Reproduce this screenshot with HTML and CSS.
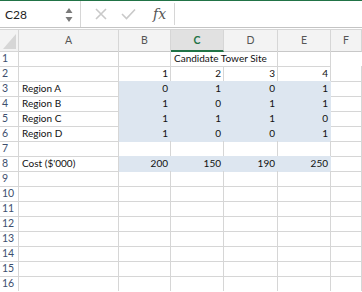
FILE: index.html
```html
<!DOCTYPE html>
<html lang="en">
<head>
    <meta charset="UTF-8">
    <title>Sheet</title>
    <link rel="stylesheet" href="styles.css">
</head>
<body>

    <!-- formula bar -->
    <div class="formula-bar">
        <div class="name-box">
            <span class="cell-ref">C28</span>
            <span class="spinner">
                <svg width="8" height="16" viewBox="0 0 8 16"><path d="M4 1 L7.5 6 L0.5 6 Z M0.5 10 L7.5 10 L4 15 Z" fill="#7a7a7a"/></svg>
            </span>
        </div>
        <div class="fb-buttons">
            <svg width="12" height="12" viewBox="0 0 12 12"><path d="M1 1 L11 11 M11 1 L1 11" stroke="#c9c9c9" stroke-width="1.6" fill="none"/></svg>
            <svg width="15" height="12" viewBox="0 0 15 12"><path d="M1 6 L5.5 10.5 L14 1.5" stroke="#c9c9c9" stroke-width="1.6" fill="none"/></svg>
            <span class="fx">fx</span>
        </div>
        <div class="formula-input"></div>
    </div>

    <!-- sheet -->
    <div class="sheet">
        <div class="row head">
            <div class="corner"><span class="tri"></span></div>
            <div class="ch">A</div><div class="ch">B</div><div class="ch active">C</div><div class="ch">D</div><div class="ch">E</div><div class="ch">F</div>
        </div>
        <div class="row">
            <div class="rh">1</div><div class="c"></div><div class="c"></div><div class="c span2"><span class="over">Candidate Tower Site</span></div><div class="c"></div><div class="c"></div>
        </div>
        <div class="row">
            <div class="rh">2</div><div class="c"></div><div class="c n ul">1</div><div class="c n ul">2</div><div class="c n ul">3</div><div class="c n ul">4</div><div class="c"></div>
        </div>
        <div class="row">
            <div class="rh">3</div><div class="c">Region A</div><div class="c n f">0</div><div class="c n f">1</div><div class="c n f">0</div><div class="c n f">1</div><div class="c"></div>
        </div>
        <div class="row">
            <div class="rh">4</div><div class="c">Region B</div><div class="c n f">1</div><div class="c n f">0</div><div class="c n f">1</div><div class="c n f">1</div><div class="c"></div>
        </div>
        <div class="row">
            <div class="rh">5</div><div class="c">Region C</div><div class="c n f">1</div><div class="c n f">1</div><div class="c n f">1</div><div class="c n f">0</div><div class="c"></div>
        </div>
        <div class="row">
            <div class="rh">6</div><div class="c">Region D</div><div class="c n f">1</div><div class="c n f">0</div><div class="c n f">0</div><div class="c n f">1</div><div class="c"></div>
        </div>
        <div class="row">
            <div class="rh">7</div><div class="c"></div><div class="c"></div><div class="c"></div><div class="c"></div><div class="c"></div><div class="c"></div>
        </div>
        <div class="row">
            <div class="rh">8</div><div class="c">Cost ($'000)</div><div class="c n f">200</div><div class="c n f">150</div><div class="c n f">190</div><div class="c n f">250</div><div class="c"></div>
        </div>
        <div class="row"><div class="rh">9</div><div class="c"></div><div class="c"></div><div class="c"></div><div class="c"></div><div class="c"></div><div class="c"></div></div>
        <div class="row"><div class="rh">10</div><div class="c"></div><div class="c"></div><div class="c"></div><div class="c"></div><div class="c"></div><div class="c"></div></div>
        <div class="row"><div class="rh">11</div><div class="c"></div><div class="c"></div><div class="c"></div><div class="c"></div><div class="c"></div><div class="c"></div></div>
        <div class="row"><div class="rh">12</div><div class="c"></div><div class="c"></div><div class="c"></div><div class="c"></div><div class="c"></div><div class="c"></div></div>
        <div class="row"><div class="rh">13</div><div class="c"></div><div class="c"></div><div class="c"></div><div class="c"></div><div class="c"></div><div class="c"></div></div>
        <div class="row"><div class="rh">14</div><div class="c"></div><div class="c"></div><div class="c"></div><div class="c"></div><div class="c"></div><div class="c"></div></div>
        <div class="row"><div class="rh">15</div><div class="c"></div><div class="c"></div><div class="c"></div><div class="c"></div><div class="c"></div><div class="c"></div></div>
        <div class="row"><div class="rh">16</div><div class="c"></div><div class="c"></div><div class="c"></div><div class="c"></div><div class="c"></div><div class="c"></div></div>
    </div>

</body>
</html>
```

FILE: styles.css
```css
body { margin: 0; font-family: Lato, "Liberation Sans", sans-serif; background: #fff; color: #111; overflow: hidden; }

/* formula bar */
.formula-bar { display: flex; height: 26px; border-top: 1px solid #217346; border-bottom: 1px solid #c4c4c4; }
.name-box { width: 81px; display: flex; align-items: center; justify-content: space-between; padding: 0 7px 0 5px; box-sizing: border-box; border-right: 1px solid #d6d6d6; }
.cell-ref { font-size: 12px; color: #222; }
.spinner { display: flex; margin-top: 1px; }
.fb-buttons { width: 94px; display: flex; align-items: center; gap: 14px; padding-left: 14px; box-sizing: border-box; border-right: 1px solid #d6d6d6; margin: 2px 0; }
.fx { font-family: "DejaVu Serif", serif; font-style: italic; font-size: 14px; color: #555; margin-left: 3px; }
.formula-input { flex: 1; }

/* sheet grid */
.sheet { margin-top: 1px; border-top: 1px solid #d6d6d6; }
.row { display: grid; grid-template-columns: 19px 100px 52px 53px 54px 53px 1fr; height: 15px; }
.row.head { height: 21px; background: #f3f3f3; }
.row > div { box-sizing: border-box; border-right: 1px solid #d6d6d6; border-bottom: 1px solid #d6d6d6; font-size: 10px; line-height: 14px; white-space: nowrap; }

.corner { position: relative; border-color: #cfcfcf; }
.corner .tri { position: absolute; right: 2px; bottom: 2px; width: 0; height: 0; border-left: 13px solid transparent; border-bottom: 15px solid #d6d6d6; }
.ch { text-align: center; color: #555; font-size: 10.5px !important; line-height: 20px !important; border-bottom-color: #c8c8c8 !important; }
.ch.active { background: #e1e1e1; color: #217346; font-weight: bold; border-bottom: 2px solid #217346 !important; }

.rh { color: #3e4f6e; padding-left: 2px; font-size: 10.5px !important; line-height: 15px !important; }
.c { padding: 0 2px 0 3px; }
.c.n { text-align: right; }
.c.f { background: #dde6f0; border-color: #dde6f0 !important; }
.c.ul { border-bottom: 1px solid #111 !important; }
.span2 { border-right-color: transparent !important; }
.over { position: relative; z-index: 1; }
```
